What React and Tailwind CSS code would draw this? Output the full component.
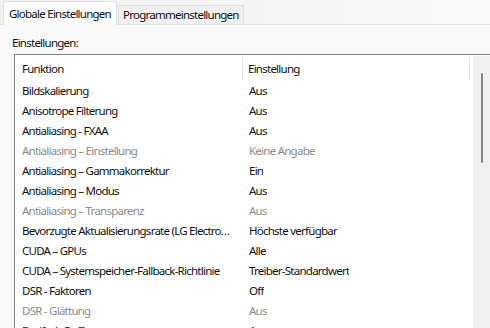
import React from 'react';

const rows = [
  { name: 'Bildskalierung', value: 'Aus' },
  { name: 'Anisotrope Filterung', value: 'Aus' },
  { name: 'Antialiasing - FXAA', value: 'Aus' },
  { name: 'Antialiasing – Einstellung', value: 'Keine Angabe', disabled: true },
  { name: 'Antialiasing – Gammakorrektur', value: 'Ein' },
  { name: 'Antialiasing – Modus', value: 'Aus' },
  { name: 'Antialiasing – Transparenz', value: 'Aus', disabled: true },
  { name: 'Bevorzugte Aktualisierungsrate (LG Electronics LG ULTRAGEAR)', value: 'Höchste verfügbar' },
  { name: 'CUDA – GPUs', value: 'Alle' },
  { name: 'CUDA – Systemspeicher-Fallback-Richtlinie', value: 'Treiber-Standardwert' },
  { name: 'DSR - Faktoren', value: 'Off' },
  { name: 'DSR - Glättung', value: 'Aus', disabled: true },
  { name: 'Dreifach-Puffer', value: 'Aus' },
];

export default function App() {
  return (
    <div className="w-[490px] h-[328px] overflow-hidden bg-[#f9f9f9] text-[11.5px] tracking-[-0.75px] text-[#111] font-['Noto_Sans',sans-serif] leading-[16px]">
      {/* tab strip */}
      <div className="flex items-end h-[25px] bg-gradient-to-r from-[#f1f1f1] to-[#fafafa] border-b border-[#e3e3e3]">
        <div className="ml-[3px] h-[24px] px-[5px] flex items-center bg-[#fcfcfc] border border-b-0 border-[#e0e0e0] -mb-px">
          Globale Einstellungen
        </div>
        <div className="ml-px h-[19px] px-[4px] flex items-center bg-[#f0f0f0] border border-b-0 border-[#e3e3e3]">
          Programmeinstellungen
        </div>
      </div>

      <div className="pl-[14px]">
        <div className="h-[29px] flex items-end pb-[3px] -ml-[2px]">Einstellungen:</div>

        {/* list box */}
        <div className="flex h-[300px] bg-white border-l border-t border-[#828282]">
          <div className="flex-1 min-w-0">
            <div className="flex h-[25px] pt-[2px]">
              <div className="w-[228px] flex items-center pl-[7px] border-r border-[#e5e5e5]">Funktion</div>
              <div className="w-[227px] flex items-center pl-[5px] border-r border-[#e5e5e5]">Einstellung</div>
            </div>
            {rows.map((r) => (
              <div key={r.name} className={`flex h-[20px] items-center pt-[2px] ${r.disabled ? 'text-[#8c8c8c]' : ''}`}>
                <div className="w-[228px] pl-[7px] pr-[10px] truncate">{r.name}</div>
                <div className="pl-[6px] truncate">{r.value}</div>
              </div>
            ))}
          </div>
          {/* scrollbar */}
          <div className="w-[17px] mt-[1px] bg-[#f0f0f0] flex justify-center">
            <div className="w-[2px] h-[90px] mt-[17px] rounded-full bg-[#858585]" />
          </div>
        </div>
      </div>
    </div>
  );
}
